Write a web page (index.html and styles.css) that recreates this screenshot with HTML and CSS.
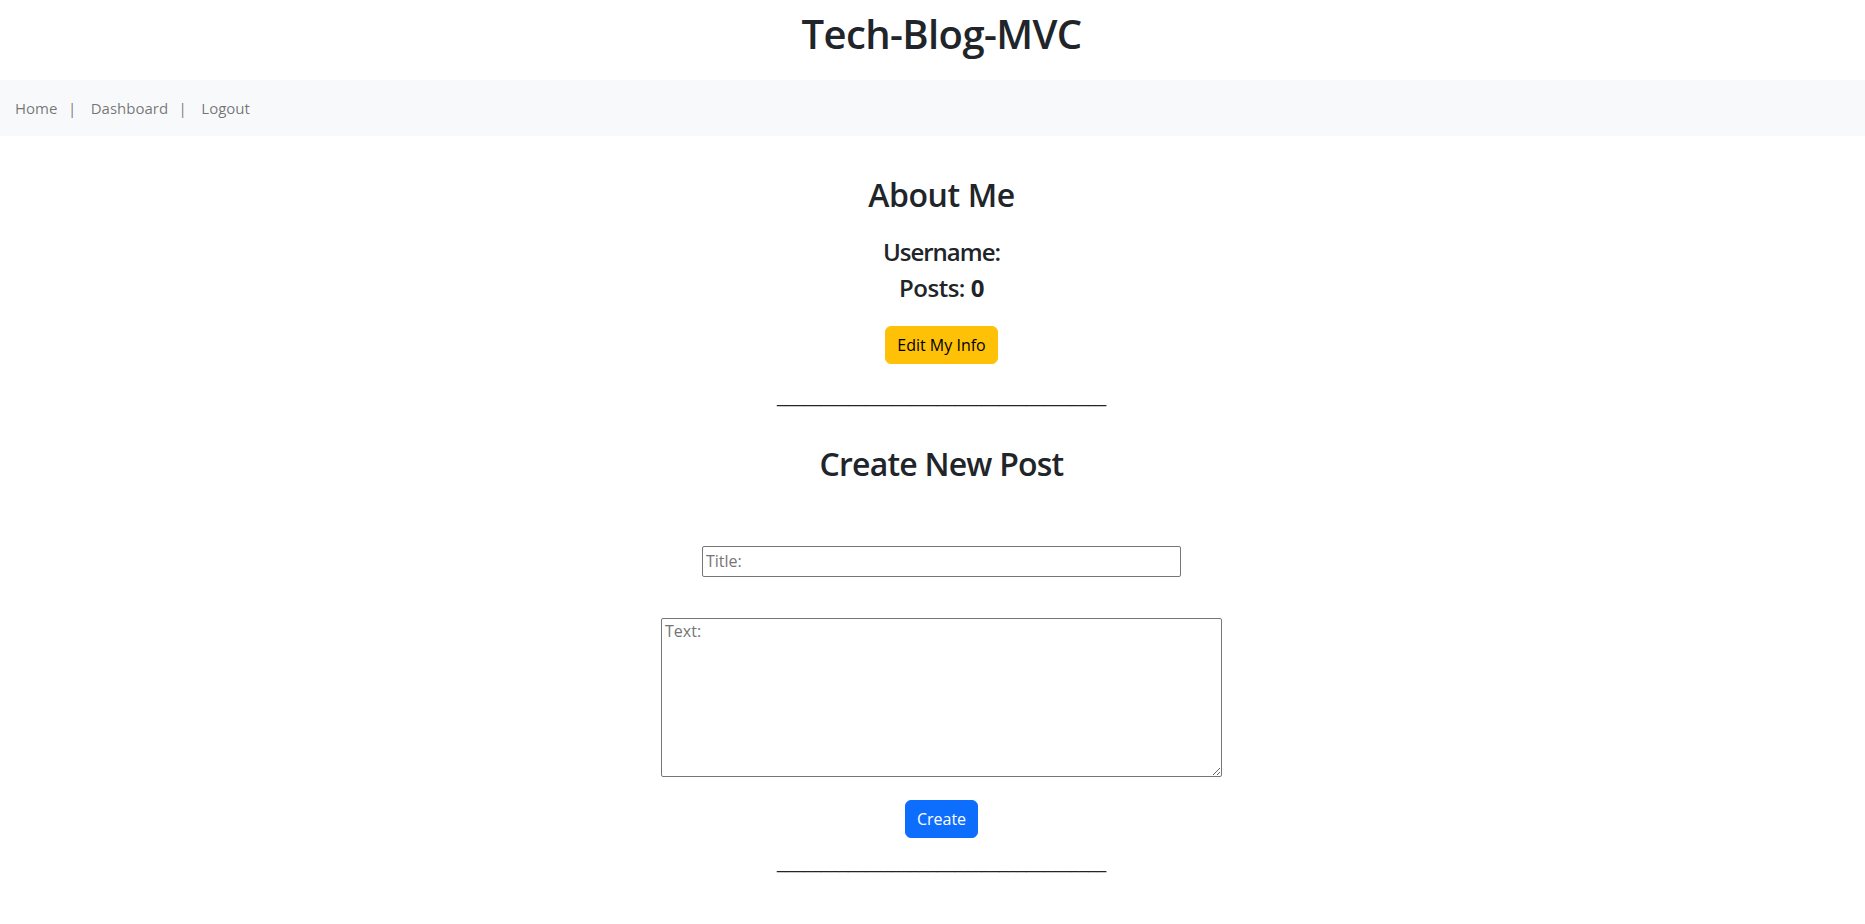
FILE: index.html
```html
<!DOCTYPE html>
<html lang="en">
<head>
<meta charset="utf-8">
<title>Tech-Blog-MVC</title>
<link rel="stylesheet" href="styles.css">
</head>
<body>
<header class="site-header">
  <h1 class="site-title">Tech-Blog-MVC</h1>
</header>
<nav class="navbar">
  <a class="nav-link" href="#">Home</a>
  <span class="nav-sep">|</span>
  <a class="nav-link" href="#">Dashboard</a>
  <span class="nav-sep">|</span>
  <a class="nav-link" href="#">Logout</a>
</nav>
<main class="dashboard">
  <h2 class="section-title about-title">About Me</h2>
  <h4 class="info-line user-line">Username: </h4>
  <h4 class="info-line posts-line">Posts: <strong>0</strong></h4>
  <button class="btn btn-warning edit-btn" type="button">Edit My Info</button>
  <p class="divider divider-top">_____________________________________</p>
  <h2 class="section-title create-title">Create New Post</h2>
  <form class="post-form">
    <input class="title-input" type="text" placeholder="Title:">
    <textarea class="text-input" placeholder="Text:"></textarea>
    <button class="btn btn-primary create-btn" type="button">Create</button>
  </form>
  <p class="divider">_____________________________________</p>
</main>
</body>
</html>
```
FILE: styles.css
```css
* { box-sizing: border-box; }

body {
  margin: 0;
  font-family: "Open Sans", "Noto Sans", sans-serif;
  font-size: 16px;
  line-height: 1.5;
  color: #212529;
  background: #fff;
}

.site-header {
  height: 80px;
  padding: 10px 0 0 18px;
  text-align: center;
}

.site-title {
  margin: 0;
  font-size: 40px;
  font-weight: 600;
  line-height: 48px;
  letter-spacing: -0.6px;
}

.navbar {
  height: 56px;
  background: #f8f9fa;
  display: flex;
  align-items: center;
  padding-left: 15px;
  font-size: 15px;
}

.nav-link {
  color: rgba(0, 0, 0, 0.55);
  text-decoration: none;
}

.nav-sep {
  color: rgba(0, 0, 0, 0.55);
  margin: 0 14.5px 0 10.5px;
}

.dashboard {
  display: flex;
  flex-direction: column;
  align-items: center;
  padding: 40px 0 40px 18px;
}

.section-title {
  margin: 0;
  font-size: 32px;
  font-weight: 600;
  line-height: 1.2;
  letter-spacing: -0.4px;
}

.about-title { margin-bottom: 24px; }
.create-title {
  margin-bottom: 62.6px;
  letter-spacing: -0.8px;
}

.info-line {
  margin: 0 0 7px;
  font-size: 24px;
  font-weight: 600;
  line-height: 1.2;
  letter-spacing: -0.5px;
}

.user-line { letter-spacing: -1px; }

.info-line strong { font-weight: 700; }

.posts-line { margin-bottom: 23px; }

.btn {
  font-family: inherit;
  font-size: 16px;
  line-height: 24px;
  padding: 6px 11px;
  border: 1px solid transparent;
  border-radius: 6px;
  cursor: pointer;
}

.btn-warning {
  background: #ffc107;
  border-color: #ffc107;
  color: #000;
}

.btn-primary {
  background: #0d6efd;
  border-color: #0d6efd;
  color: #fff;
}

.edit-btn { margin-bottom: 22.5px; }

.divider {
  margin: 0;
  font-family: "Liberation Sans", Arial, sans-serif;
  font-size: 16px;
  line-height: 24px;
  color: #212529;
}

.divider-top { margin-bottom: 34.5px; }

.post-form {
  display: flex;
  flex-direction: column;
  align-items: center;
  margin-bottom: 14.5px;
}

.title-input {
  width: 479px;
  height: 31px;
  padding: 1px 3px;
  border: 1px solid #767676;
  border-radius: 2px;
  font-family: inherit;
  font-size: 16px;
  color: #212529;
  margin: 0 0 41px;
}

.text-input {
  width: 561px;
  height: 159px;
  padding: 2px 3px;
  border: 1px solid #767676;
  border-radius: 2px;
  font-family: inherit;
  font-size: 16px;
  line-height: 21px;
  color: #212529;
  margin: 0 0 23px;
}

.title-input::placeholder,
.text-input::placeholder {
  color: #757575;
}
```
